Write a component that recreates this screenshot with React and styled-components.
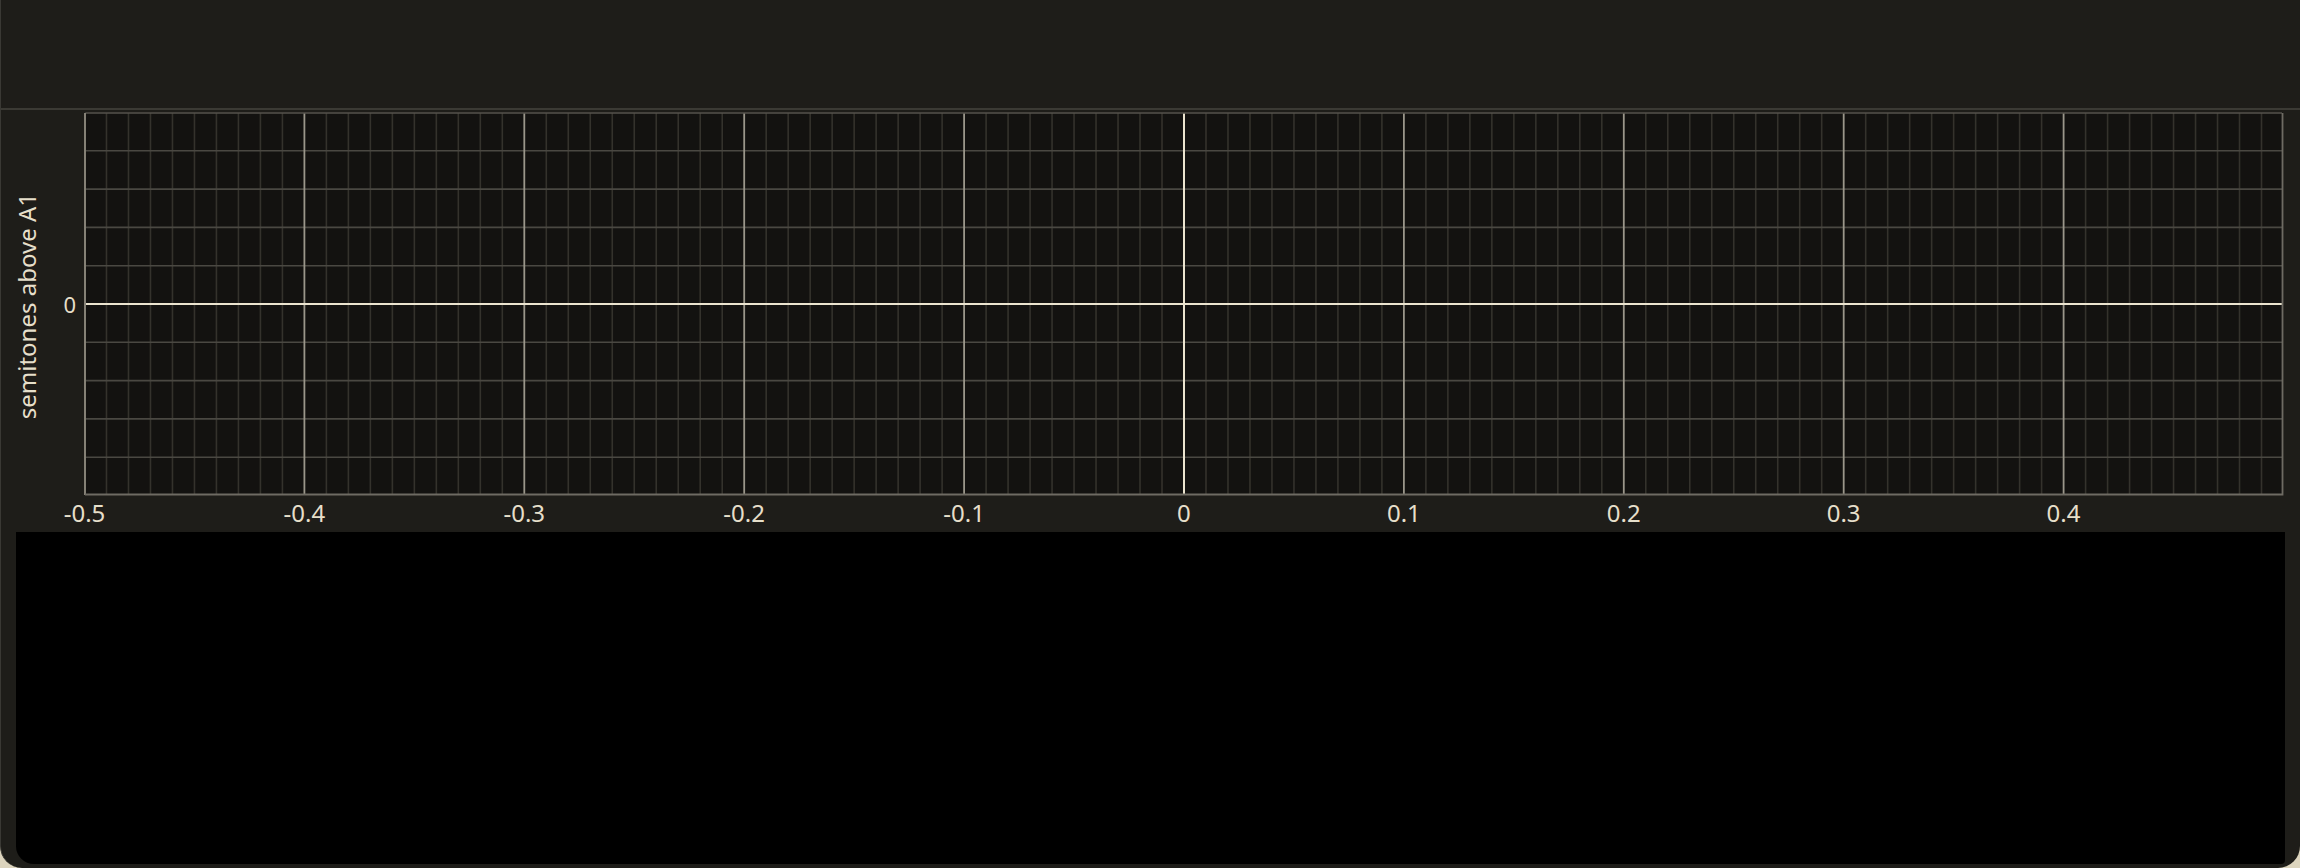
import React from 'react'
import styled, { createGlobalStyle } from 'styled-components'

const GlobalStyle = createGlobalStyle`
    html, body {
        margin: 0;
        padding: 0;
        background: #dcd4bd;
        overflow: hidden;
    }
    body {
        font-family: "Noto Sans", "Open Sans", sans-serif;
    }
`

const PLOT_W = 2200
const PLOT_H = 384
const STEP_X = 21.99
const STEP_Y = 38.3

const Window = styled.div`
    width: 2300px;
    height: 868px;
    box-sizing: border-box;
    display: flex;
    flex-direction: column;
    background: #1e1d19;
    border-left: 1px solid #3a3934;
    border-radius: 0 0 22px 22px;
    overflow: hidden;
`

const TopBar = styled.div`
    height: 108px;
    flex-shrink: 0;
    border-bottom: 2px solid #3b3a34;
`

const ChartArea = styled.div`
    display: grid;
    grid-template-columns: 83px ${PLOT_W}px 16px;
    grid-template-rows: ${PLOT_H}px 36px;
    margin-top: 2px;
`

const YAxis = styled.div`
    display: flex;
    align-items: center;
    padding-left: 9px;
    padding-right: 8px;
    color: #e6dfca;
`

const YTitle = styled.span`
    writing-mode: vertical-rl;
    transform: rotate(180deg);
    font-size: 24px;
    line-height: 33px;
    margin-top: 4px;
    white-space: nowrap;
`

const YTick = styled.span`
    margin-left: auto;
    font-size: 22px;
    line-height: 1;
`

const Plot = styled.svg`
    display: block;
    overflow: visible;
`

const XAxis = styled.div`
    grid-column: 2;
    display: grid;
    grid-template-columns: repeat(10, ${STEP_X * 10}px);
    align-items: center;
    padding-left: 0.5px;
    padding-bottom: 3px;
    color: #e6dfca;
    font-size: 24px;
    line-height: 1;
`

const XTick = styled.span`
    justify-self: start;
    transform: translateX(-50%);
    white-space: nowrap;
`

const Viewport = styled.div`
    flex: 1;
    margin: 0 15px 4px 15px;
    background: #000;
    border-radius: 0 0 4px 18px;
`

const ticks = ['-0.5', '-0.4', '-0.3', '-0.2', '-0.1', '0', '0.1', '0.2', '0.3', '0.4']

const Grid = () => {
    const verticals = Array.from({ length: 101 }, (_, i) => i)
    const horizontals = Array.from({ length: 11 }, (_, j) => j)
    return (
        <Plot width={PLOT_W} height={PLOT_H} viewBox={`0 0 ${PLOT_W} ${PLOT_H}`}>
            <rect x="0.5" y="0.5" width={PLOT_W - 1.5} height={PLOT_H - 1.5} fill="#131210" />
            {verticals.map(i => {
                if (i % 10 === 0) return null
                const x = 0.5 + i * STEP_X
                return <line key={'m' + i} x1={x} x2={x} y1="1" y2={PLOT_H - 1} stroke="#34322c" strokeWidth="1.6" />
            })}
            {horizontals.map(j => {
                if (j === 0 || j === 10 || j === 5) return null
                const y = 0.5 + j * STEP_Y
                return <line key={'h' + j} x1="1" x2={PLOT_W - 1} y1={y} y2={y} stroke="#4a4842" strokeWidth="1.6" />
            })}
            {verticals.map(i => {
                if (i % 10 !== 0 || i === 0 || i === 100 || i === 50) return null
                const x = 0.5 + i * STEP_X
                return <line key={'M' + i} x1={x} x2={x} y1="1" y2={PLOT_H - 1} stroke="#9a968a" strokeWidth="1.8" />
            })}
            <line x1="1" x2={PLOT_W - 1} y1={0.5 + 5 * STEP_Y} y2={0.5 + 5 * STEP_Y} stroke="#ebe4cf" strokeWidth="2" />
            <line x1={0.5 + 50 * STEP_X} x2={0.5 + 50 * STEP_X} y1="1" y2={PLOT_H - 1} stroke="#ebe4cf" strokeWidth="2" />
            <path d={`M1 ${PLOT_H - 1} V2 Q1 1 2 1 H${PLOT_W - 2}`} fill="none" stroke="#55534c" strokeWidth="1.5" />
            <line x1="1" x2="1" y1="1" y2={PLOT_H - 1} stroke="#8d897d" strokeWidth="1.8" />
            <path d={`M${PLOT_W - 1.5} 1 V${PLOT_H - 1.5} H1`} fill="none" stroke="#6e6b63" strokeWidth="1.8" />
        </Plot>
    )
}

const App = () => {
    return (
        <>
            <GlobalStyle />
            <Window>
                <TopBar />
                <ChartArea>
                    <YAxis>
                        <YTitle>semitones above A1</YTitle>
                        <YTick>0</YTick>
                    </YAxis>
                    <Grid />
                    <div />
                    <XAxis>
                        {ticks.map(t => (
                            <XTick key={t}>{t}</XTick>
                        ))}
                    </XAxis>
                </ChartArea>
                <Viewport />
            </Window>
        </>
    )
}

export default App
